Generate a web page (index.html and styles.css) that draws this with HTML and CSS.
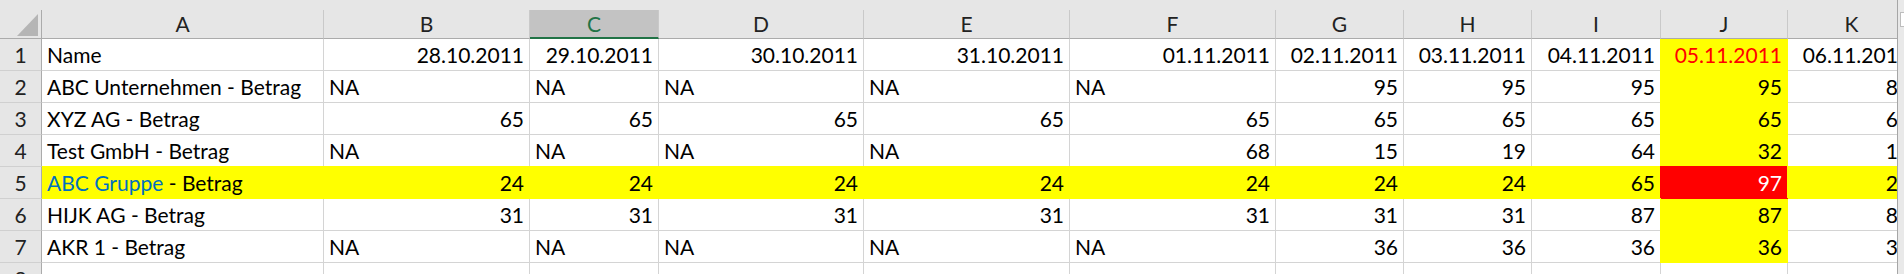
FILE: index.html
```html
<!DOCTYPE html>
<html lang="de">
<head>
<meta charset="utf-8">
<title>Tabelle</title>
<link rel="stylesheet" href="styles.css">
</head>
<body>
<div class="window">
  <div class="sheet">
    <div class="topstrip"></div>
    <div class="grid">
      <div class="corner"><svg class="tri" width="21" height="22" viewBox="0 0 21 22"><polygon points="0,22 21,0 21,22" fill="#b5b5b5"/></svg></div>
      <div class="ch">A</div>
      <div class="ch">B</div>
      <div class="ch sel">C</div>
      <div class="ch">D</div>
      <div class="ch">E</div>
      <div class="ch">F</div>
      <div class="ch">G</div>
      <div class="ch">H</div>
      <div class="ch">I</div>
      <div class="ch">J</div>
      <div class="ch">K</div>

      <div class="rh">1</div>
      <div class="cell">Name</div>
      <div class="cell num">28.10.2011</div>
      <div class="cell num">29.10.2011</div>
      <div class="cell num">30.10.2011</div>
      <div class="cell num">31.10.2011</div>
      <div class="cell num">01.11.2011</div>
      <div class="cell num">02.11.2011</div>
      <div class="cell num">03.11.2011</div>
      <div class="cell num">04.11.2011</div>
      <div class="cell num fj redtxt">05.11.2011</div>
      <div class="cell num">06.11.2011</div>

      <div class="rh">2</div>
      <div class="cell">ABC Unternehmen - Betrag</div>
      <div class="cell">NA</div>
      <div class="cell">NA</div>
      <div class="cell">NA</div>
      <div class="cell">NA</div>
      <div class="cell">NA</div>
      <div class="cell num">95</div>
      <div class="cell num">95</div>
      <div class="cell num">95</div>
      <div class="cell num fj">95</div>
      <div class="cell num">85</div>

      <div class="rh">3</div>
      <div class="cell">XYZ AG - Betrag</div>
      <div class="cell num">65</div>
      <div class="cell num">65</div>
      <div class="cell num">65</div>
      <div class="cell num">65</div>
      <div class="cell num">65</div>
      <div class="cell num">65</div>
      <div class="cell num">65</div>
      <div class="cell num">65</div>
      <div class="cell num fj">65</div>
      <div class="cell num">65</div>

      <div class="rh">4</div>
      <div class="cell">Test GmbH - Betrag</div>
      <div class="cell">NA</div>
      <div class="cell">NA</div>
      <div class="cell">NA</div>
      <div class="cell">NA</div>
      <div class="cell num">68</div>
      <div class="cell num">15</div>
      <div class="cell num">19</div>
      <div class="cell num">64</div>
      <div class="cell num fj">32</div>
      <div class="cell num">15</div>

      <div class="rh">5</div>
      <div class="cell fya"><span class="blue">ABC Gruppe</span> - Betrag</div>
      <div class="cell num fy">24</div>
      <div class="cell num fy">24</div>
      <div class="cell num fy">24</div>
      <div class="cell num fy">24</div>
      <div class="cell num fy">24</div>
      <div class="cell num fy">24</div>
      <div class="cell num fy">24</div>
      <div class="cell num fy">65</div>
      <div class="cell num fr">97</div>
      <div class="cell num fy">24</div>

      <div class="rh">6</div>
      <div class="cell">HIJK AG - Betrag</div>
      <div class="cell num">31</div>
      <div class="cell num">31</div>
      <div class="cell num">31</div>
      <div class="cell num">31</div>
      <div class="cell num">31</div>
      <div class="cell num">31</div>
      <div class="cell num">31</div>
      <div class="cell num">87</div>
      <div class="cell num fj">87</div>
      <div class="cell num">87</div>

      <div class="rh">7</div>
      <div class="cell">AKR 1 - Betrag</div>
      <div class="cell">NA</div>
      <div class="cell">NA</div>
      <div class="cell">NA</div>
      <div class="cell">NA</div>
      <div class="cell">NA</div>
      <div class="cell num">36</div>
      <div class="cell num">36</div>
      <div class="cell num">36</div>
      <div class="cell num fj">36</div>
      <div class="cell num">36</div>

      <div class="rh">8</div>
      <div class="cell"></div>
      <div class="cell"></div>
      <div class="cell"></div>
      <div class="cell"></div>
      <div class="cell"></div>
      <div class="cell"></div>
      <div class="cell"></div>
      <div class="cell"></div>
      <div class="cell"></div>
      <div class="cell"></div>
      <div class="cell"></div>
    </div>
  </div>
  <div class="vscroll"><div class="vbtn"></div></div>
</div>
</body>
</html>
```
FILE: styles.css
```css
html, body {
  margin: 0;
  padding: 0;
  background: #ffffff;
}
.window {
  display: flex;
  width: 1904px;
  height: 274px;
  overflow: hidden;
  font-family: Lato, "Liberation Sans", sans-serif;
  font-size: 21px;
  font-variant-numeric: tabular-nums;
  color: #000;
}
.sheet {
  flex: 0 0 1897px;
  width: 1897px;
  overflow: hidden;
}
.topstrip {
  height: 10px;
  background: #e6e6e6;
}
.grid {
  display: grid;
  width: 1916px;
  grid-template-columns: 42px 282px 206px 129px 205px 206px 206px 128px 128px 129px 127px 128px;
  grid-template-rows: 29px;
  grid-auto-rows: 32px;
}
.grid > div {
  box-sizing: border-box;
  white-space: nowrap;
  overflow: hidden;
}
.corner {
  background: #e6e6e6;
  border-right: 1px solid #ababab;
  border-bottom: 1px solid #ababab;
  display: flex;
  justify-content: flex-end;
  align-items: flex-end;
  padding: 0 3px 2px 0;
}
.tri {
  display: block;
}
.ch {
  background: #e6e6e6;
  border-right: 1px solid #c9c9c9;
  border-bottom: 1px solid #ababab;
  text-align: center;
  padding-top: 0;
  line-height: 27px;
  color: #222;
}
.ch.sel {
  background: #c3c3c3;
  color: #217346;
  border-bottom: 2px solid #217346;
}
.rh {
  background: #e6e6e6;
  border-right: 1px solid #ababab;
  border-bottom: 1px solid #d0d0d0;
  text-align: center;
  padding-top: 2px;
  line-height: 28px;
  color: #222;
}
.cell {
  border-right: 1px solid #d4d4d4;
  border-bottom: 1px solid #d4d4d4;
  padding: 2px 5px 0 5px;
  line-height: 28px;
}
.num {
  text-align: right;
}
.fy {
  background: #ffff00;
  border-color: #ffff00;
  box-shadow: -1px -1px 0 0 #ffff00;
}
.fya {
  background: #ffff00;
  border-color: #ffff00;
  box-shadow: 0 -1px 0 0 #ffff00;
}
.fj {
  background: #ffff00;
  border-color: #ffff00;
  box-shadow: -1px 0 0 0 #ffff00;
}
.fr {
  background: #ff0000;
  border-color: #ff0000;
  box-shadow: -1px -1px 0 0 #ff0000;
  color: #ffffff;
}
.redtxt {
  color: #ff0000;
}
.blue {
  color: #0070c0;
}
.vscroll {
  flex: 1 1 auto;
  background: #e9e9e9;
  border-left: 1px solid #a6a6a6;
}
.vbtn {
  margin: 12px 0 0 2px;
  height: 13px;
  background: #ffffff;
  border: 1px solid #bdbdbd;
  border-right: none;
}
```
